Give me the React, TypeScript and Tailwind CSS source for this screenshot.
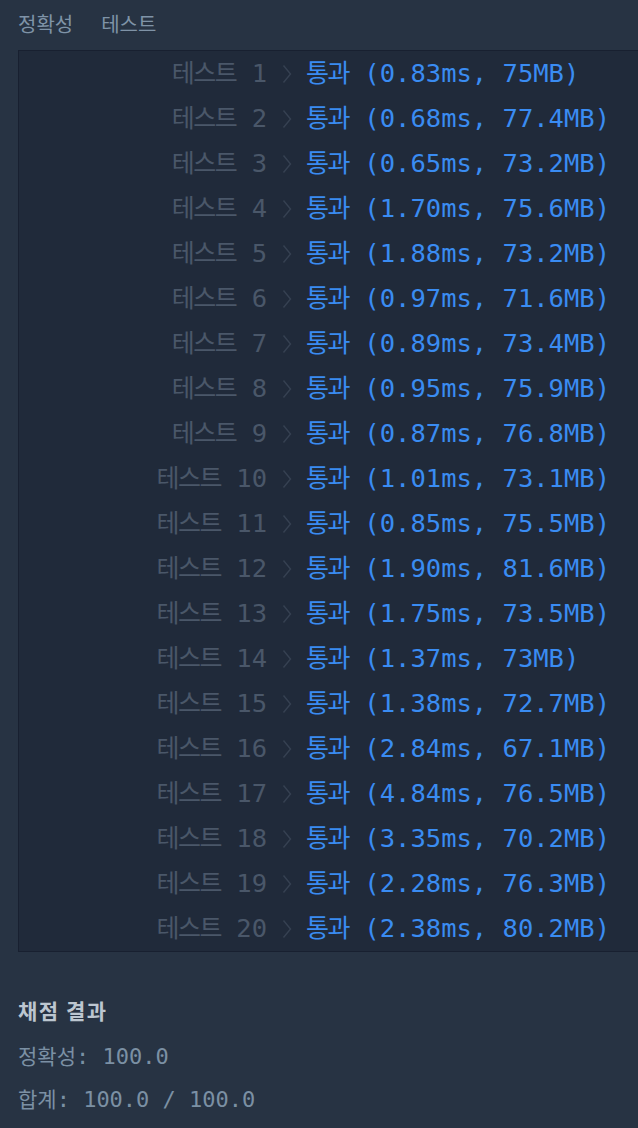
import React from "react";

const rows = [
  ["1", "0.83ms, 75MB"],
  ["2", "0.68ms, 77.4MB"],
  ["3", "0.65ms, 73.2MB"],
  ["4", "1.70ms, 75.6MB"],
  ["5", "1.88ms, 73.2MB"],
  ["6", "0.97ms, 71.6MB"],
  ["7", "0.89ms, 73.4MB"],
  ["8", "0.95ms, 75.9MB"],
  ["9", "0.87ms, 76.8MB"],
  ["10", "1.01ms, 73.1MB"],
  ["11", "0.85ms, 75.5MB"],
  ["12", "1.90ms, 81.6MB"],
  ["13", "1.75ms, 73.5MB"],
  ["14", "1.37ms, 73MB"],
  ["15", "1.38ms, 72.7MB"],
  ["16", "2.84ms, 67.1MB"],
  ["17", "4.84ms, 76.5MB"],
  ["18", "3.35ms, 70.2MB"],
  ["19", "2.28ms, 76.3MB"],
  ["20", "2.38ms, 80.2MB"],
];

const mono = "font-['DejaVu_Sans_Mono','Noto_Sans_CJK_KR',monospace]";
const ko = "font-['Noto_Sans_CJK_KR',sans-serif]";

function Chevron() {
  return (
    <svg width="10" height="20" viewBox="0 0 10 20" className="shrink-0">
      <polyline points="1.5,1.5 8.5,10 1.5,18.5" fill="none" stroke="#364152" strokeWidth="1.4" />
    </svg>
  );
}

export default function App() {
  return (
    <div className="min-h-[1128px] w-[638px] overflow-hidden bg-[#273343] pl-[18px]">
      <div className={`${ko} flex h-[50px] items-center gap-[28px] pb-[3px] text-[20px] text-[#7f93a7]`}>
        <span>정확성</span>
        <span>테스트</span>
      </div>

      <div className={`${mono} w-[640px] border border-r-0 border-[#182030] bg-[#202a3a] text-[25.5px]`}>
        {rows.map(([n, r]) => (
          <div key={n} className="flex h-[45px] items-center whitespace-pre">
            <div className="w-[248px] pb-[1px] text-right text-[#4a5769]">
              <span className={`${ko} text-[25px] tracking-[-1.5px]`}>테스트</span>
              {" " + n}
            </div>
            <div className="ml-[15px] mr-[14px] flex items-center">
              <Chevron />
            </div>
            <div className="pb-[1px] text-[#3a8cf2]">
              <span className={`${ko} text-[25px] tracking-[-1.5px]`}>통과</span>
              {" (" + r + ")"}
            </div>
          </div>
        ))}
      </div>

      <div className="pt-[43px]">
        <div className={`${ko} text-[21px] font-bold tracking-[1.5px] text-[#bcc6d0]`}>채점 결과</div>
        <div className={`${mono} mt-[13px] flex flex-col gap-[10px] whitespace-pre text-[22px] text-[#7b90a4]`}>
          <div>
            <span className={`${ko} text-[21px]`}>정확성</span>: 100.0
          </div>
          <div>
            <span className={`${ko} text-[21px]`}>합계</span>: 100.0 / 100.0
          </div>
        </div>
      </div>
    </div>
  );
}
